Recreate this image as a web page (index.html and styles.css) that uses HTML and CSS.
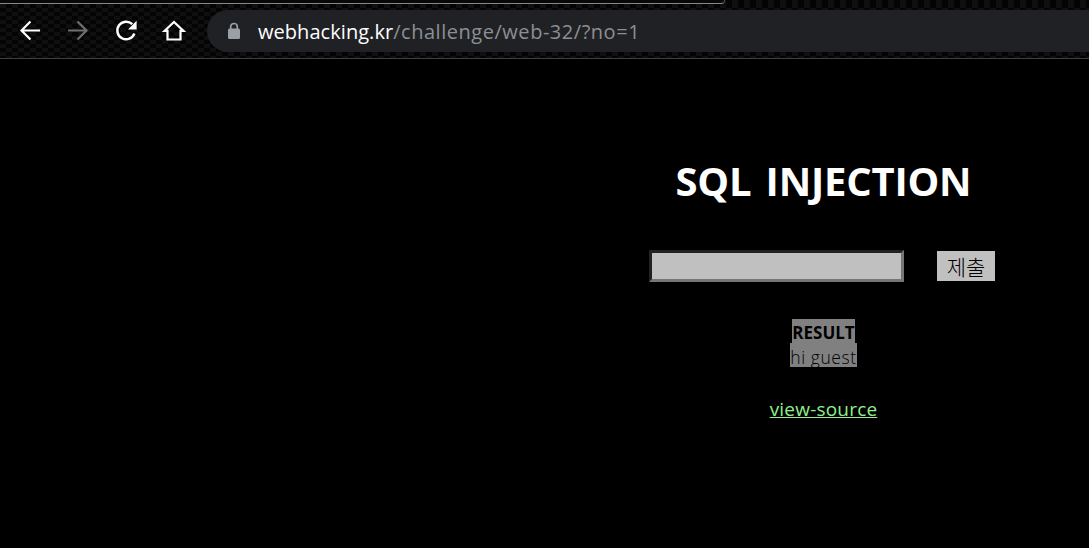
FILE: index.html
```html
<!DOCTYPE html>
<html lang="ko">

<head>
    <meta charset="UTF-8">
    <title>Challenge 32</title>
    <link rel="stylesheet" href="styles.css">
</head>

<body>
    <div class="tab-edge"><div class="tab-line"></div></div>
    <div class="toolbar">
        <div class="nav">
            <svg width="24" height="24" viewBox="0 0 24 24" fill="none" stroke="#fff" stroke-width="2.2">
                <path d="M22 11.5H3.5M12.5 2.5l-9 9 9 9" />
            </svg>
            <svg width="24" height="24" viewBox="0 0 24 24" fill="none" stroke="#6f6f6f" stroke-width="2.2">
                <path d="M2 11.5h18.5M11.5 2.5l9 9-9 9" />
            </svg>
            <svg width="24" height="24" viewBox="0 0 24 24">
                <path d="M18.3 5.2A8.8 8.8 0 1 0 20.4 14.5" fill="none" stroke="#fff" stroke-width="2.4" />
                <path d="M22.6 1.8v8.6H14z" fill="#fff" />
            </svg>
            <svg width="24" height="24" viewBox="0 0 24 24" fill="none" stroke="#fff" stroke-width="2.2">
                <path d="M5.5 11.8H2.7L12 3l9.3 8.8h-2.8M5.5 10.8v9.7h13v-9.7" />
            </svg>
        </div>
        <div class="address">
            <svg class="lock" width="14" height="18" viewBox="0 0 14 18">
                <path d="M3.7 8V4.8a3.3 3.3 0 0 1 6.6 0V8" fill="none" stroke="#9aa0a6" stroke-width="1.7" />
                <rect x="1" y="6.5" width="12" height="10.5" rx="1.5" fill="#9aa0a6" />
            </svg>
            <div class="url"><span class="host">webhacking.kr</span><span class="path">/challenge/web-32/?no=1</span></div>
        </div>
    </div>

    <div class="content">
        <h1>SQL INJECTION</h1>
        <form class="search">
            <input type="text" name="no" class="field">
            <input type="submit" value="제출" class="submit">
        </form>
        <div class="result">
            <b class="result-title">RESULT</b>
            <span class="result-text">hi guest</span>
        </div>
        <a class="source" href="?view_source=1">view-source</a>
    </div>
</body>

</html>
```

FILE: styles.css
```css
body {
    margin: 0;
    height: 548px;
    overflow: hidden;
    background-color: #000;
    color: #fff;
    font-family: "Open Sans", "Noto Sans CJK KR", sans-serif;
}

.tab-edge,
.toolbar {
    background-color: #080808;
    background-image: conic-gradient(#040404 25%, #0f0f0f 0 50%, #040404 0 75%, #0f0f0f 0);
    background-size: 12px 8px;
}

.tab-edge {
    height: 4px;
}

.tab-line {
    box-sizing: border-box;
    width: 725px;
    height: 4px;
    border-bottom: 1px solid #888;
    border-right: 1px solid #555;
    border-radius: 0 0 10px 0;
    background-color: #080808;
}

.toolbar {
    box-sizing: border-box;
    display: flex;
    height: 55px;
    padding-top: 6px;
    border-bottom: 1px solid #3f3f3f;
}

.nav {
    display: flex;
    align-items: center;
    gap: 24px;
    width: 189px;
    height: 41px;
    padding-left: 18px;
}

.address {
    display: flex;
    flex: 1;
    align-items: center;
    height: 42px;
    padding-left: 20px;
    border-radius: 21px 0 0 21px;
    background-color: #202124;
}

.lock {
    margin-right: 17px;
}

.url {
    font-size: 20px;
    white-space: nowrap;
}

.host {
    color: #fff;
    letter-spacing: 0.05px;
}

.path {
    color: #8c8f93;
    letter-spacing: 0.53px;
}

.content {
    display: flex;
    flex-direction: column;
    align-items: center;
    margin-left: 558px;
    padding-top: 94px;
}

h1 {
    margin: 0;
    font-size: 40px;
    line-height: 56px;
    letter-spacing: -0.2px;
    word-spacing: 4px;
    white-space: nowrap;
}

.search {
    display: flex;
    align-items: center;
    gap: 33px;
    margin: 41px 3px 0 0;
}

.field {
    box-sizing: border-box;
    width: 255px;
    height: 32px;
    border: 3px solid;
    border-color: #222 #767676 #767676 #222;
    background-color: silver;
}

.submit {
    width: 58px;
    height: 30px;
    padding: 0;
    border: 0;
    background-color: silver;
    color: #000;
    font-family: "Noto Sans CJK KR", sans-serif;
    font-size: 21px;
    font-weight: 300;
    line-height: 30px;
}

.result {
    display: flex;
    flex-direction: column;
    align-items: center;
    margin-top: 37px;
    color: #000;
    font-size: 17px;
    line-height: 20px;
}

.result-title,
.result-text {
    padding-top: 4px;
    background-color: gray;
}

.result-title {
    letter-spacing: 0;
}

.result-text {
    font-size: 17.5px;
    font-weight: 300;
    letter-spacing: 0.55px;
}

.source {
    margin-top: 28px;
    color: lightgreen;
    font-size: 19px;
    line-height: 28px;
    letter-spacing: 0.2px;
}
```
